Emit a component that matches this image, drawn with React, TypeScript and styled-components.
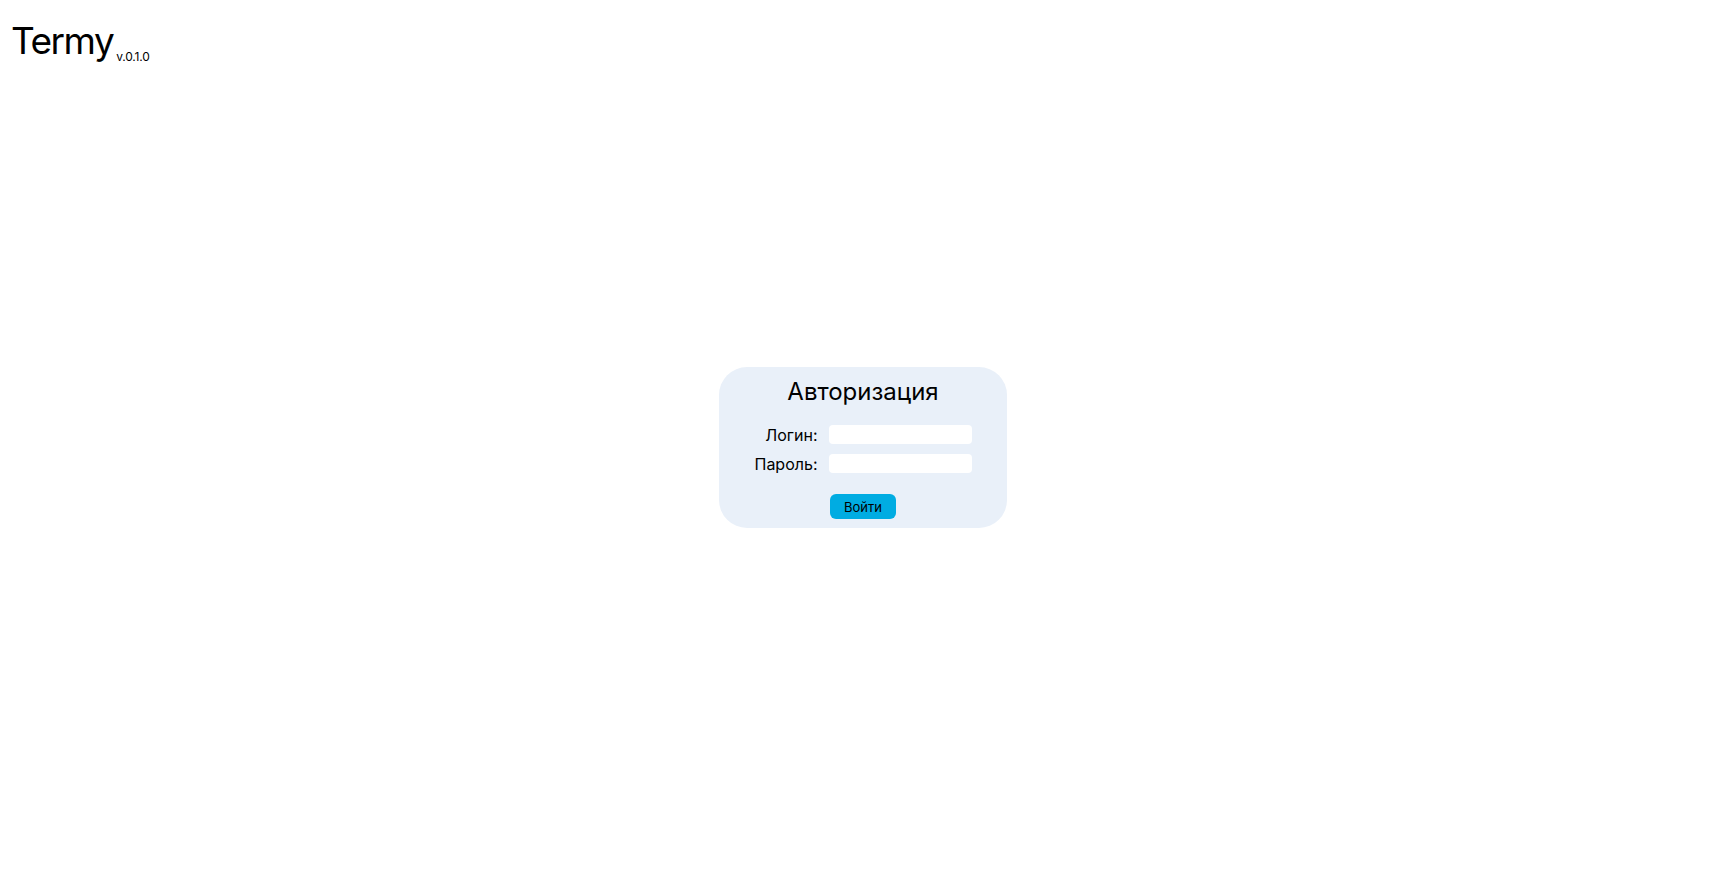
import React from "react";
import styled, { createGlobalStyle } from "styled-components";

const Global = createGlobalStyle`
  html, body { margin: 0; padding: 0; background: #fff; }
  body { font-family: Inter, "Noto Sans", sans-serif; color: #000; }
`;

const Page = styled.div`
  position: relative;
  width: 100vw;
  height: 100vh;
  display: flex;
  align-items: center;
  justify-content: center;
`;

const Header = styled.header`
  position: absolute;
  top: 19px;
  left: 11px;
  display: flex;
  align-items: baseline;
  gap: 3px;
`;

const Logo = styled.h1`
  margin: 0;
  font-size: 37px;
  font-weight: 400;
  letter-spacing: -1.5px;
  line-height: 1.2;
`;

const Version = styled.span`
  font-size: 12px;
  letter-spacing: -0.2px;
  position: relative;
  top: 7px;
`;

const Card = styled.form`
  width: 288px;
  height: 161px;
  box-sizing: border-box;
  background: #e9f0f9;
  border-radius: 28px;
  display: flex;
  flex-direction: column;
  align-items: center;
  padding-top: 10px;
`;

const Title = styled.h2`
  margin: 0 0 18px;
  font-size: 24px;
  font-weight: 400;
  line-height: 30px;
`;

const Fields = styled.div`
  display: grid;
  grid-template-columns: auto 143px;
  column-gap: 11px;
  row-gap: 10px;
  align-items: center;
`;

const Label = styled.label`
  font-size: 16px;
  text-align: right;
  line-height: 18px;
`;

const Input = styled.input`
  box-sizing: border-box;
  width: 143px;
  height: 19px;
  border: none;
  border-radius: 4px;
  background: #fff;
  outline: none;
  padding: 0 4px;
`;

const Button = styled.button`
  margin-top: 21px;
  width: 66px;
  height: 25px;
  border: none;
  border-radius: 6px;
  background: #00ace2;
  color: #000;
  font-family: Inter, sans-serif;
  font-size: 13px;
  cursor: pointer;
`;

export default function App() {
  return (
    <>
      <Global />
      <Page>
        <Header>
          <Logo>Termy</Logo>
          <Version>v.0.1.0</Version>
        </Header>
        <Card onSubmit={(e) => e.preventDefault()}>
          <Title>Авторизация</Title>
          <Fields>
            <Label htmlFor="login">Логин:</Label>
            <Input id="login" type="text" />
            <Label htmlFor="password">Пароль:</Label>
            <Input id="password" type="password" />
          </Fields>
          <Button type="submit">Войти</Button>
        </Card>
      </Page>
    </>
  );
}
